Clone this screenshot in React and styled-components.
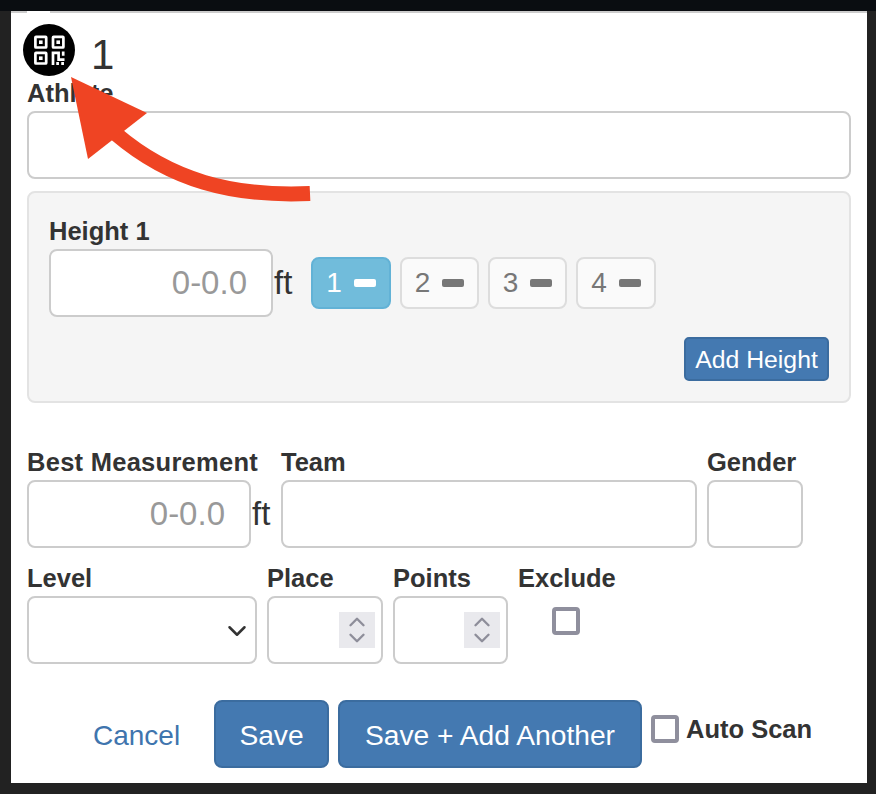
import React from 'react';
import styled, { createGlobalStyle } from 'styled-components';
import { ChevronDown, ChevronUp } from 'lucide-react';

const Global = createGlobalStyle`
  html, body {
    margin: 0;
    background: #222;
  }
  * {
    box-sizing: border-box;
  }
`;

const Page = styled.div`
  position: relative;
  width: 876px;
  height: 794px;
  overflow: hidden;
  display: flex;
  flex-direction: column;
  font-family: "Liberation Sans", Arial, sans-serif;
  color: #333;
  background: #222;
`;

const TopBand = styled.div`
  height: 11px;
  background: #0a0d11;
`;

const Frame = styled.div`
  width: 856px;
  height: 772px;
  margin-left: 11px;
  background: #fff;
  display: flex;
  flex-direction: column;
`;

const TopEdge = styled.div`
  height: 2px;
  display: flex;
  background: #ccc;
`;

const EdgeGap = styled.div`
  width: 23px;
  margin-left: 16px;
  background: #fff;
`;

const Content = styled.div`
  padding: 11px 16px 0;
  display: flex;
  flex-direction: column;
`;

const Header = styled.div`
  height: 52px;
  margin-left: -4px;
  display: flex;
  align-items: center;
  gap: 16px;
`;

const QrBadge = styled.div`
  width: 52px;
  height: 52px;
  border-radius: 50%;
  background: #000;
  display: flex;
  align-items: center;
  justify-content: center;
`;

const HeaderNumber = styled.div`
  font-size: 42px;
  line-height: 52px;
  padding-top: 9px;
`;

const Label = styled.div`
  height: 30px;
  font-size: 25.5px;
  line-height: 24px;
  font-weight: 700;
  white-space: nowrap;
  letter-spacing: ${({ $tracking }) => $tracking || 0}px;
  margin-top: ${({ $top }) => $top || 0}px;
`;

const Input = styled.input`
  display: block;
  width: ${({ $width }) => ($width ? `${$width}px` : '100%')};
  height: 68px;
  flex: none;
  padding: 0 24px;
  border: 2px solid #ccc;
  border-radius: 8px;
  background: #fff;
  font-family: inherit;
  font-size: 33px;
  color: #333;
  text-align: ${({ $align }) => $align || 'left'};
  outline: none;
  &::placeholder {
    color: #999;
    opacity: 1;
  }
`;

const Well = styled.div`
  height: 212px;
  margin-top: 12px;
  padding: 26px 20px 0;
  background: #f5f5f5;
  border: 2px solid #e3e3e3;
  border-radius: 8px;
  display: flex;
  flex-direction: column;
`;

const UnitRow = styled.div`
  display: flex;
  align-items: center;
`;

const Unit = styled.span`
  width: 20px;
  padding-left: 1px;
  font-size: 33px;
  flex: none;
`;

const HeightTabs = styled.div`
  display: flex;
  gap: 9px;
  margin-left: 18px;
`;

const HeightTab = styled.div`
  width: ${({ $active, $wide }) => ($active || $wide ? 80 : 79)}px;
  height: 52px;
  display: flex;
  align-items: center;
  justify-content: center;
  gap: 12px;
  border: 2px solid ${({ $active }) => ($active ? '#62b2d6' : '#ddd')};
  border-radius: 8px;
  background: ${({ $active }) => ($active ? '#71bcdb' : '#fafafa')};
  color: ${({ $active }) => ($active ? '#fff' : '#777')};
  font-size: 28px;
`;

const Minus = styled.span`
  width: 22px;
  height: 8px;
  border-radius: 2px;
  background: currentColor;
`;

const WellFooter = styled.div`
  display: flex;
  justify-content: flex-end;
  margin-top: 20px;
`;

const Button = styled.button`
  height: ${({ $small }) => ($small ? 44 : 68)}px;
  width: ${({ $width }) => $width}px;
  padding: ${({ $small }) => ($small ? 1 : 3)}px 0 0;
  border: 2px solid #3b6c9f;
  border-radius: ${({ $small }) => ($small ? 5 : 8)}px;
  background: #4479b1;
  color: #fff;
  font-family: inherit;
  font-size: ${({ $small }) => ($small ? 24.8 : 28.2)}px;
`;

const FieldRow = styled.div`
  display: flex;
  gap: 10px;
  margin-top: ${({ $top }) => $top}px;
`;

const Column = styled.div`
  width: ${({ $width }) => $width}px;
  flex: none;
  display: flex;
  flex-direction: column;
`;

const BoxField = styled.div`
  height: 68px;
  border: 2px solid #ccc;
  border-radius: 8px;
  background: #fff;
  display: flex;
  align-items: center;
  justify-content: flex-end;
  padding-right: ${({ $pad }) => $pad}px;
  color: #333;
`;

const SelectChevron = styled(ChevronDown)`
  margin-top: 2px;
`;

const Spinner = styled.div`
  width: 36px;
  height: 36px;
  background: #e9e9ed;
  color: #8e8e9a;
  display: flex;
  flex-direction: column;
  align-items: center;
  justify-content: center;
  svg {
    flex: none;
    margin: -5px 0;
  }
`;

const Check = styled.input`
  appearance: none;
  flex: none;
  display: block;
  width: 28px;
  height: 28px;
  margin: ${({ $margin }) => $margin || 0};
  background: #fff;
  border: 4px solid #8f8f9d;
  border-radius: 4px;
`;

const Footer = styled.div`
  display: flex;
  align-items: center;
  margin-top: 36px;
`;

const Cancel = styled.a`
  width: 121px;
  margin-left: 66px;
  padding-top: 3px;
  font-size: 28px;
  color: #3f75ae;
`;

const FooterButtons = styled.div`
  display: flex;
  gap: 9px;
`;

const AutoScan = styled.label`
  display: flex;
  align-items: center;
  gap: 7px;
  margin: 0 0 10px 9px;
  font-size: 25.5px;
  font-weight: 700;
`;

const Arrow = styled.svg`
  position: absolute;
  left: 0;
  top: 0;
  pointer-events: none;
`;

function QrIcon() {
  return (
    <svg width="32" height="32" viewBox="0 0 32 32" fill="none" stroke="#fff" strokeWidth="2.7">
      <rect x="2.4" y="2.9" width="10.8" height="10.6" rx="0.6" />
      <rect x="20" y="2.9" width="10.4" height="10.6" rx="0.6" />
      <rect x="2.4" y="18.9" width="10.8" height="10.6" rx="0.6" />
      <rect x="6" y="6.4" width="3.6" height="3.6" fill="#fff" stroke="none" />
      <rect x="23.4" y="6.4" width="3.6" height="3.6" fill="#fff" stroke="none" />
      <rect x="6" y="22.4" width="3.6" height="3.6" fill="#fff" stroke="none" />
      <path d="M20 31V18.9H25.6V25.6H31.5M30.2 17.6V21.8" />
      <path d="M24.6 28V31M29.6 28V31" />
    </svg>
  );
}

function NumberBox({ pad }) {
  return (
    <BoxField $pad={pad}>
      <Spinner>
        <ChevronUp size={26} strokeWidth={2.2} />
        <ChevronDown size={26} strokeWidth={2.2} />
      </Spinner>
    </BoxField>
  );
}

export default function App() {
  return (
    <Page>
      <Global />
      <TopBand />
      <Frame>
        <TopEdge>
          <EdgeGap />
        </TopEdge>
        <Content>
          <Header>
            <QrBadge>
              <QrIcon />
            </QrBadge>
            <HeaderNumber>1</HeaderNumber>
          </Header>
          <Label $top={5}>Athlete</Label>
          <Input />
          <Well>
            <Label>Height 1</Label>
            <UnitRow>
              <Input $width={224} $align="right" placeholder="0-0.0" />
              <Unit>ft</Unit>
              <HeightTabs>
                <HeightTab $active>1 <Minus /></HeightTab>
                <HeightTab>2 <Minus /></HeightTab>
                <HeightTab>3 <Minus /></HeightTab>
                <HeightTab $wide>4 <Minus /></HeightTab>
              </HeightTabs>
            </UnitRow>
            <WellFooter>
              <Button $small $width={145}>Add Height</Button>
            </WellFooter>
          </Well>
          <FieldRow $top={47}>
            <Column $width={244}>
              <Label $tracking={0.27}>Best Measurement</Label>
              <UnitRow>
                <Input $width={224} $align="right" placeholder="0-0.0" />
                <Unit>ft</Unit>
              </UnitRow>
            </Column>
            <Column $width={416}>
              <Label>Team</Label>
              <Input />
            </Column>
            <Column $width={96}>
              <Label>Gender</Label>
              <Input />
            </Column>
          </FieldRow>
          <FieldRow $top={18}>
            <Column $width={230}>
              <Label>Level</Label>
              <BoxField $pad={3}>
                <SelectChevron size={30} strokeWidth={2} />
              </BoxField>
            </Column>
            <Column $width={116}>
              <Label>Place</Label>
              <NumberBox pad={6} />
            </Column>
            <Column $width={115}>
              <Label>Points</Label>
              <NumberBox pad={6} />
            </Column>
            <Column $width={100}>
              <Label>Exclude</Label>
              <Check type="checkbox" $margin="11px 0 0 34px" />
            </Column>
          </FieldRow>
          <Footer>
            <Cancel>Cancel</Cancel>
            <FooterButtons>
              <Button $width={115}>Save</Button>
              <Button $width={304}>Save + Add Another</Button>
            </FooterButtons>
            <AutoScan>
              <Check type="checkbox" />
              Auto Scan
            </AutoScan>
          </Footer>
        </Content>
      </Frame>
      <Arrow width="876" height="794" viewBox="0 0 876 794">
        <path d="M310 193.5C232 197 170 180 116 134" fill="none" stroke="#ef4423" strokeWidth="15" />
        <path d="M71 77L147 113L88 159Z" fill="#ef4423" />
      </Arrow>
    </Page>
  );
}
